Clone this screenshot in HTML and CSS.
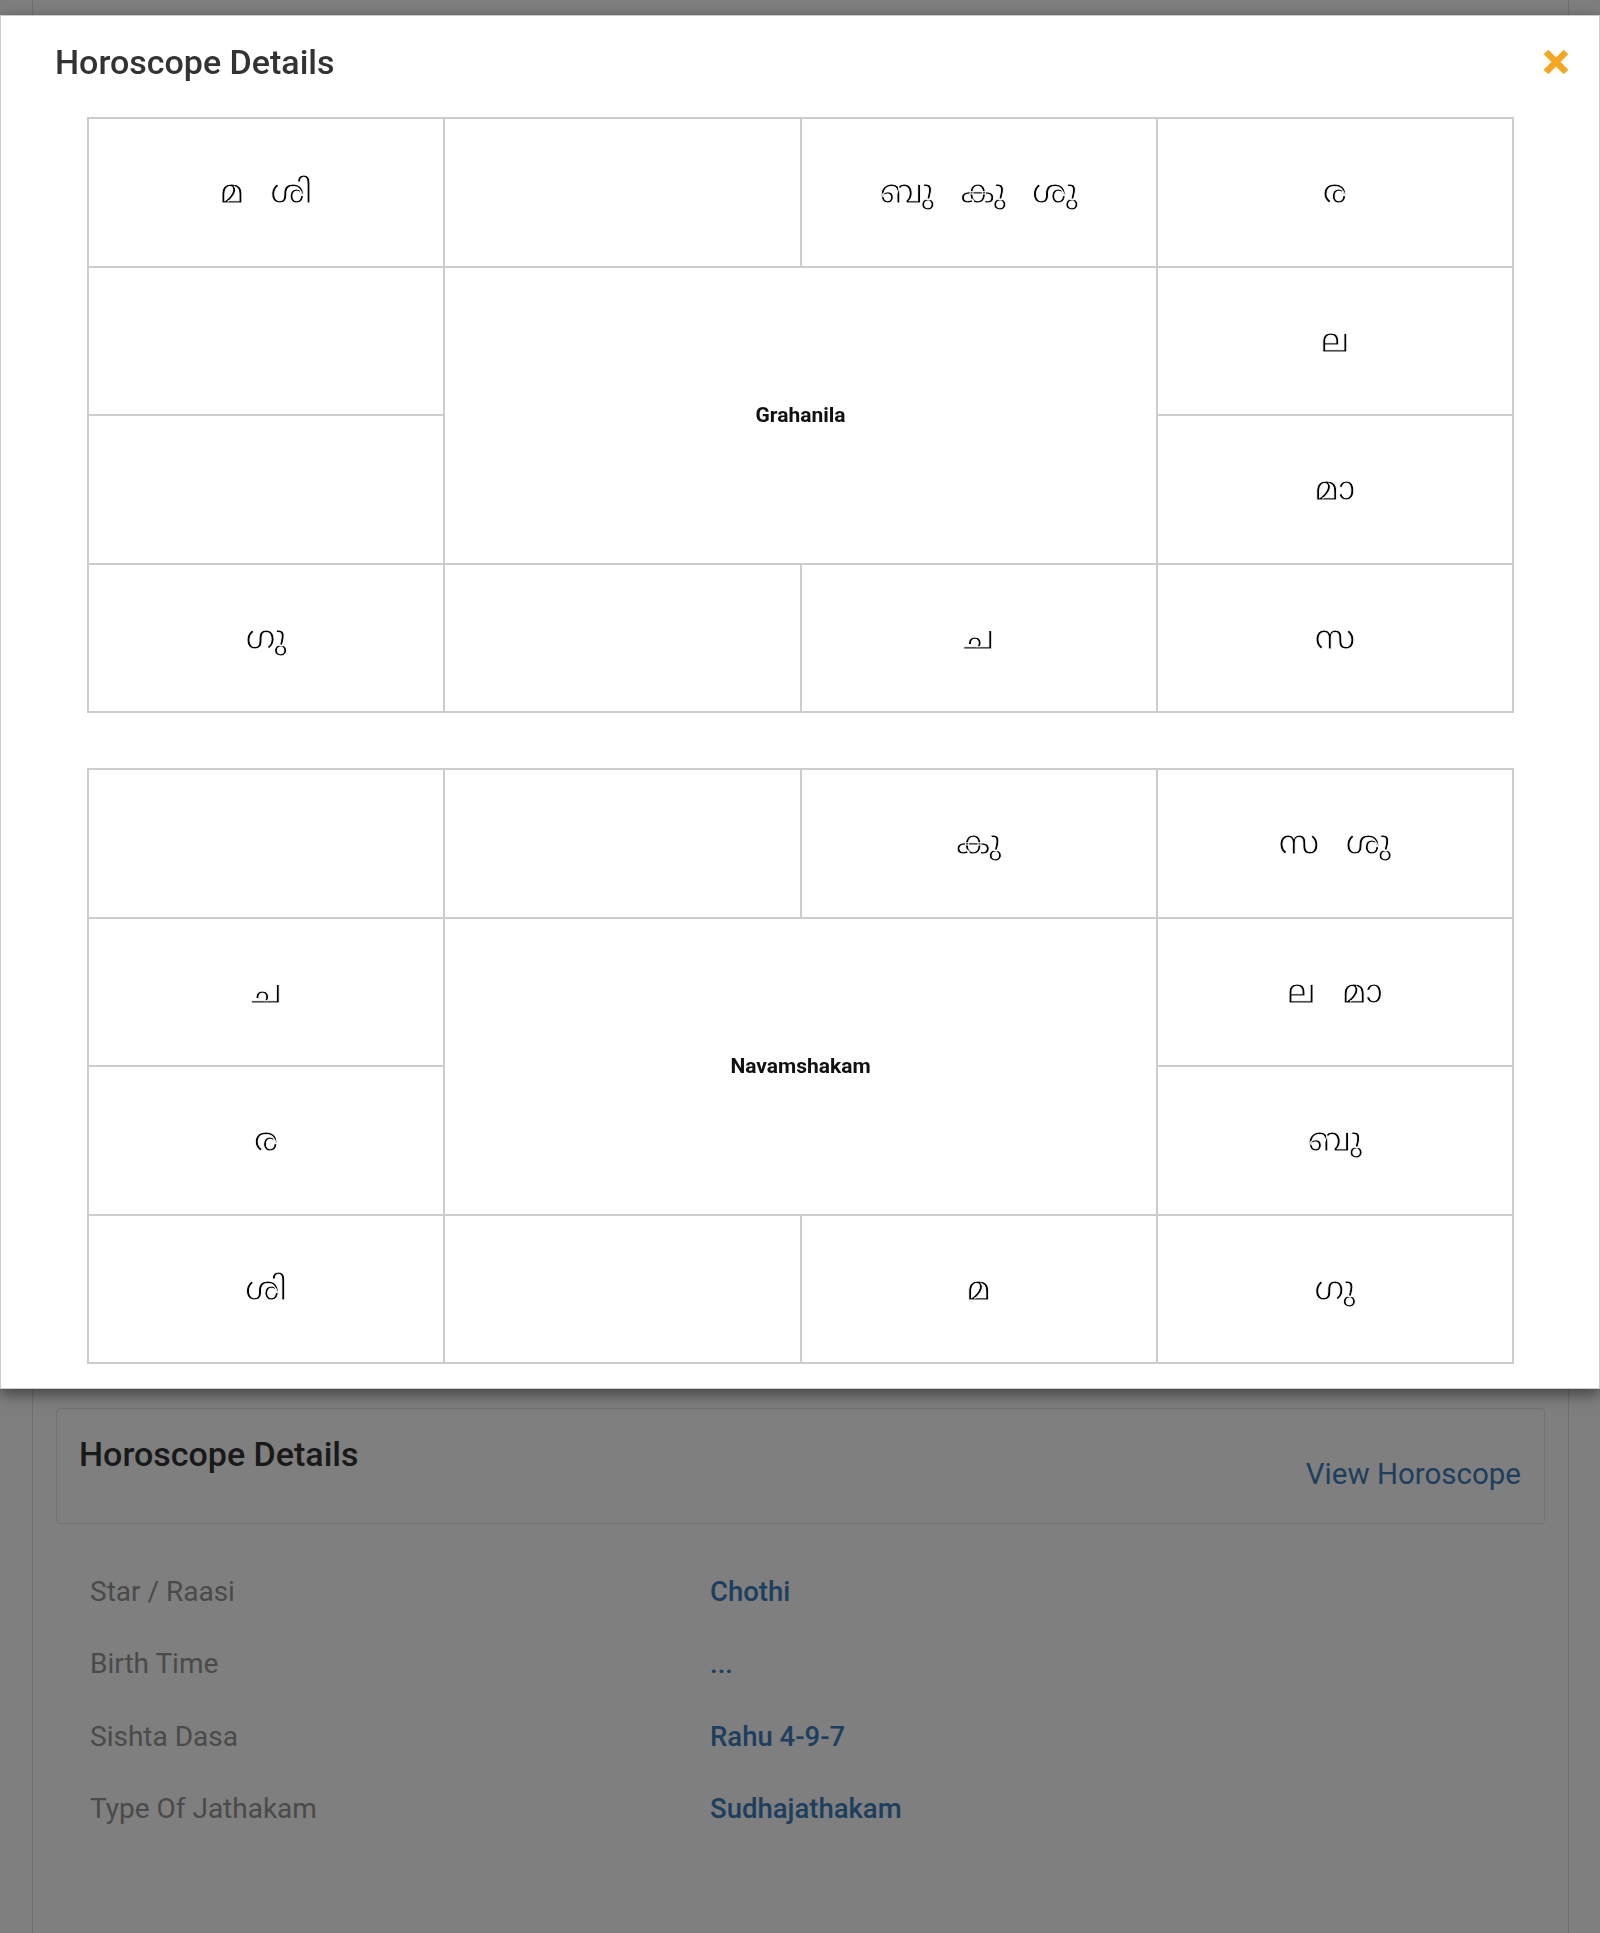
FILE: index.html
```html
<!DOCTYPE html>
<html lang="ml">
<head>
<meta charset="utf-8">
<title>Horoscope Details</title>
<link rel="stylesheet" href="styles.css">
</head>
<body>
<div class="page">
  <div class="page-hidden"></div>
  <section class="card">
    <h2 class="card-title">Horoscope Details</h2>
    <a class="card-link" href="#">View Horoscope</a>
  </section>
  <dl class="details">
    <div class="row"><dt>Star / Raasi</dt><dd>Chothi</dd></div>
    <div class="row"><dt>Birth Time</dt><dd>...</dd></div>
    <div class="row"><dt>Sishta Dasa</dt><dd>Rahu 4-9-7</dd></div>
    <div class="row"><dt>Type Of Jathakam</dt><dd>Sudhajathakam</dd></div>
  </dl>
</div>

<div class="backdrop"></div>

<div class="modal">
  <div class="modal-header">
    <h3 class="modal-title">Horoscope Details</h3>
    <button class="close" type="button" aria-label="Close">
      <svg width="26" height="26" viewBox="0 0 26 26"><path d="M3 3 L23 23 M23 3 L3 23" stroke="#f5a623" stroke-width="6.5" stroke-linecap="butt" fill="none"/></svg>
    </button>
  </div>
  <div class="modal-body">
    <div class="chart">
      <div class="cell">മ ശി</div>
      <div class="cell"></div>
      <div class="cell">ബു കു ശു</div>
      <div class="cell">ര</div>
      <div class="cell"></div>
      <div class="cell center">Grahanila</div>
      <div class="cell">ല</div>
      <div class="cell"></div>
      <div class="cell">മാ</div>
      <div class="cell">ഗു</div>
      <div class="cell"></div>
      <div class="cell">ച</div>
      <div class="cell">സ</div>
    </div>
    <div class="chart">
      <div class="cell"></div>
      <div class="cell"></div>
      <div class="cell">കു</div>
      <div class="cell">സ ശു</div>
      <div class="cell">ച</div>
      <div class="cell center">Navamshakam</div>
      <div class="cell">ല മാ</div>
      <div class="cell">ര</div>
      <div class="cell">ബു</div>
      <div class="cell">ശി</div>
      <div class="cell"></div>
      <div class="cell">മ</div>
      <div class="cell">ഗു</div>
    </div>
  </div>
</div>
</body>
</html>
```

FILE: styles.css
```css
* { box-sizing: border-box; }
html, body { margin: 0; padding: 0; }
body {
  font-family: Roboto, "Liberation Sans", sans-serif;
  background: #fff;
  color: #333;
  width: 1600px;
  height: 1933px;
  overflow: hidden;
}

.page {
  margin: 0 31px 0 32px;
  border-left: 1px solid #dcdcdc;
  border-right: 1px solid #dcdcdc;
  min-height: 1933px;
  padding: 0 23px;
}
.page-hidden { height: 1408px; }

.card {
  display: flex;
  justify-content: space-between;
  align-items: flex-start;
  height: 116px;
  border: 1px solid #e4e4e4;
  border-radius: 4px;
  padding: 25px 23px 0 22px;
}
.card-title {
  margin: 0;
  font-size: 34px;
  line-height: 40px;
  font-weight: 500;
  color: #333;
}
.card-link {
  margin-top: 23px;
  font-size: 29.5px;
  line-height: 34px;
  color: #3e7dbd;
  text-decoration: none;
}

.details {
  margin: 32px 0 0;
  padding: 0 0 0 34px;
}
.row {
  display: grid;
  grid-template-columns: 620px 1fr;
  padding: 16px 0;
  line-height: 40.3px;
  font-size: 28px;
}
.row dt { color: #959595; }
.row dd { margin: 0; color: #3c7cbd; font-weight: 500; font-size: 27.5px; }

.backdrop {
  position: fixed;
  inset: 0;
  background: rgba(0, 0, 0, 0.5);
}

.modal {
  position: absolute;
  left: 0;
  top: 15px;
  width: 1600px;
  background: #fff;
  border: 1px solid rgba(0, 0, 0, 0.2);
  box-shadow: 0 5px 15px rgba(0, 0, 0, 0.5);
  padding-bottom: 24px;
}
.modal-header {
  display: flex;
  justify-content: space-between;
  align-items: center;
  padding: 26px 30px 0 54px;
  height: 66px;
}
.modal-title {
  margin: 0;
  font-size: 34px;
  line-height: 40px;
  font-weight: 500;
  color: #333;
}
.close {
  border: 0;
  background: none;
  padding: 0;
  width: 26px;
  height: 26px;
  display: flex;
}

.modal-body {
  padding: 35px 85px 0 86px;
  display: flex;
  flex-direction: column;
  gap: 55px;
}
.chart {
  display: grid;
  grid-template-columns: repeat(4, 1fr);
  grid-template-rows: repeat(4, 148.5px);
  border: 1px solid #cccccc;
}
.cell {
  border: 1px solid #cccccc;
  display: flex;
  align-items: center;
  justify-content: center;
  padding-top: 6px;
  font-family: "Lohit Malayalam", Meera, "AnjaliOldLipi", "Noto Sans Malayalam", sans-serif;
  font-size: 33px;
  word-spacing: 0.5em;
  color: #000;
  -webkit-text-stroke: 0.9px #fff;
  white-space: pre;
}
.cell.center {
  grid-column: 2 / 4;
  grid-row: 2 / 4;
  padding-top: 0;
  font-family: Roboto, "Liberation Sans", sans-serif;
  font-size: 21px;
  font-weight: 700;
  word-spacing: 0;
  -webkit-text-stroke: 0;
  color: #111;
}
```
